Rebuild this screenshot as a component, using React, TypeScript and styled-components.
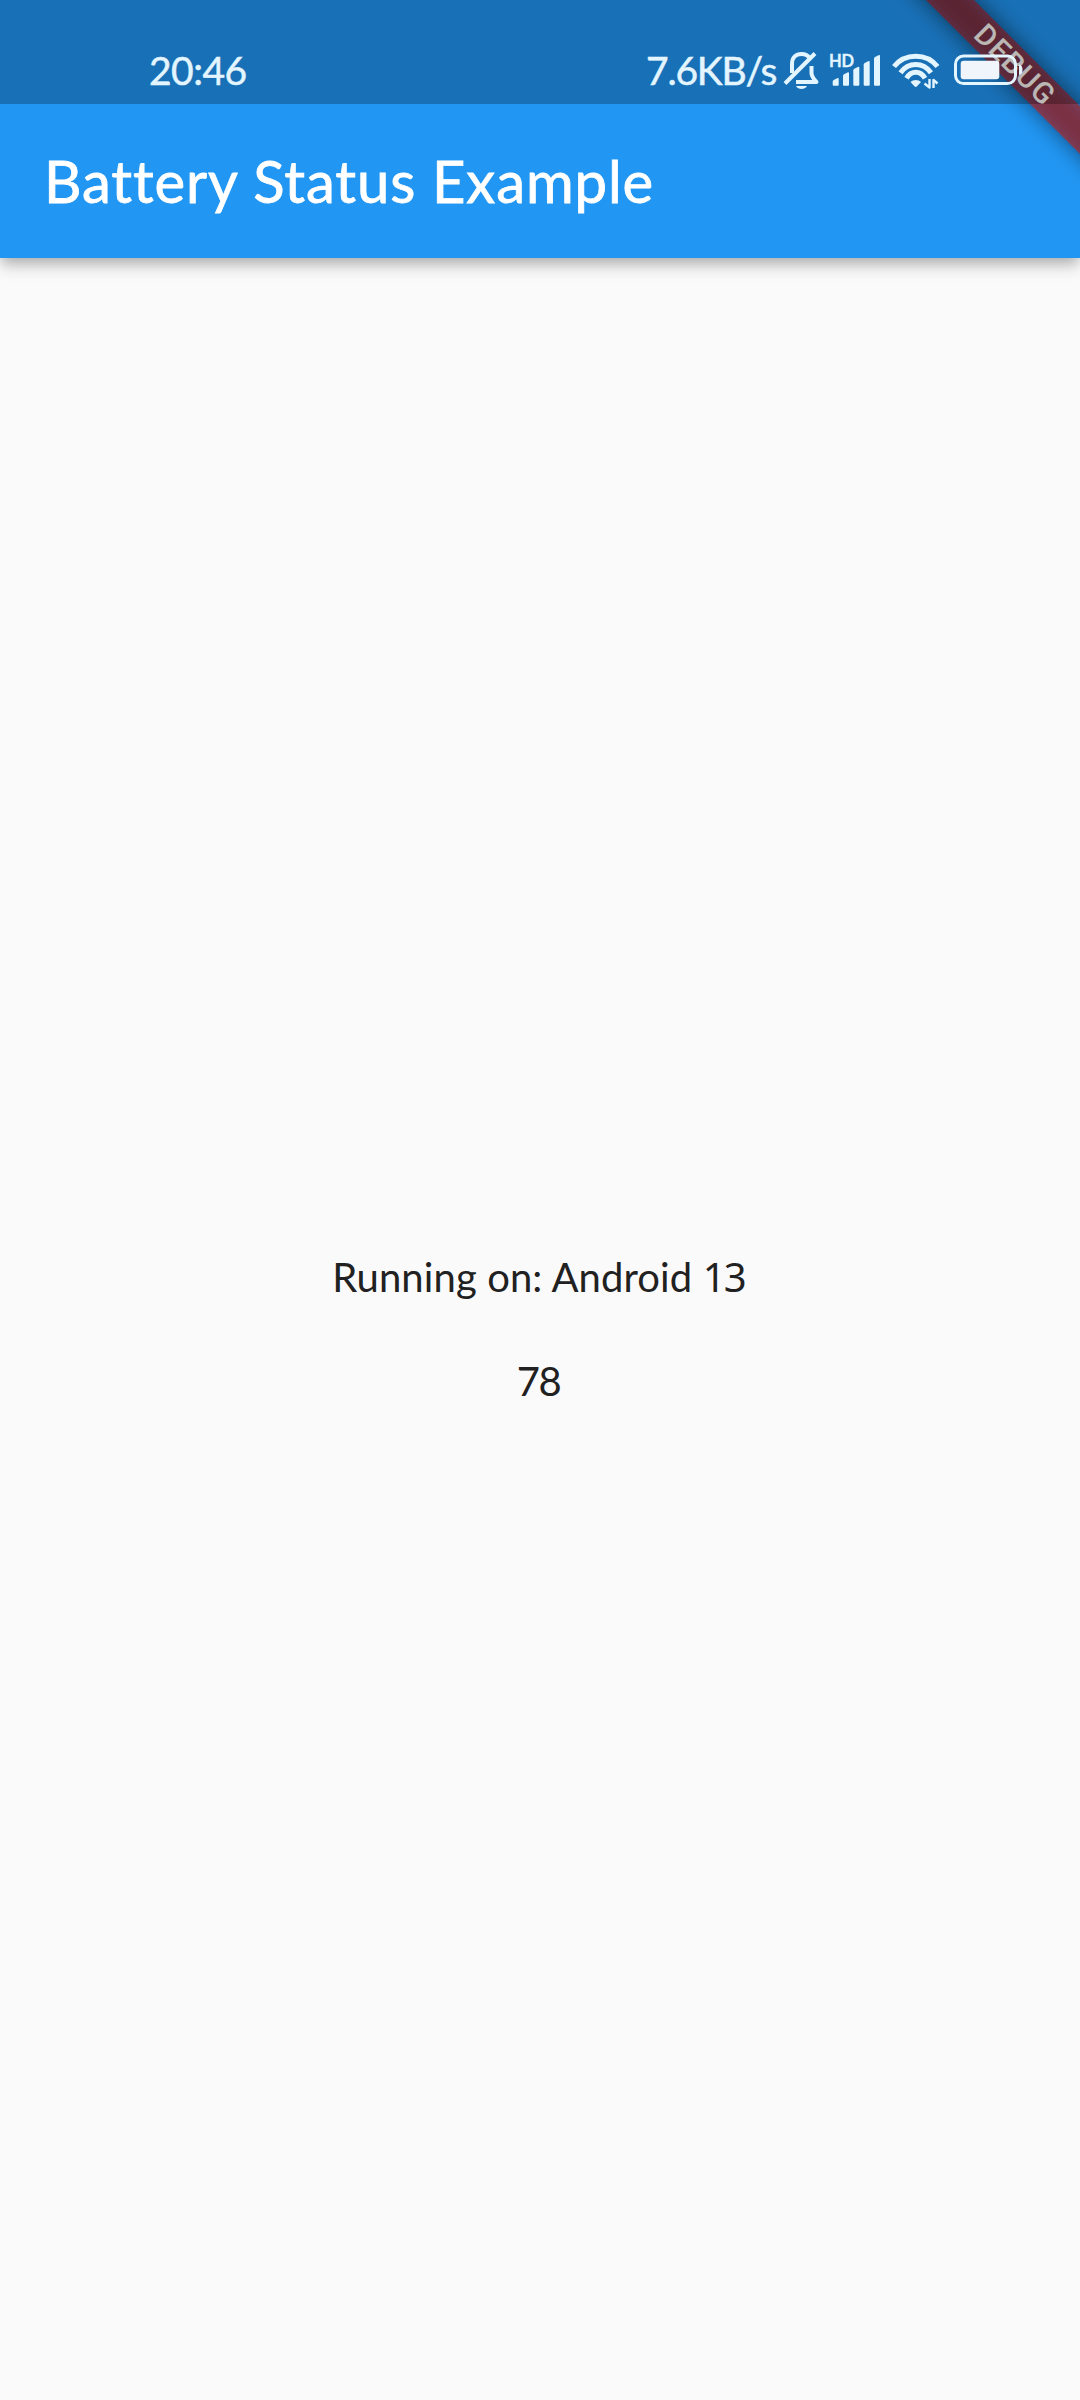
import React from "react";
import styled, { createGlobalStyle } from "styled-components";

const GlobalStyle = createGlobalStyle`
  * { box-sizing: border-box; }
  body { margin: 0; background: #fafafa; }
`;

const Screen = styled.div`
  position: relative;
  display: flex;
  flex-direction: column;
  width: 1080px;
  height: 2400px;
  overflow: hidden;
  background: #fafafa;
  font-family: Lato, "Noto Sans", sans-serif;
`;

const Header = styled.header`
  background: #2196f3;
  box-shadow: 0 6px 11px -3px rgba(0, 0, 0, 0.2), 0 11px 14px 0 rgba(0, 0, 0, 0.1),
    0 3px 20px 0 rgba(0, 0, 0, 0.08);
`;

const StatusBar = styled.div`
  position: relative;
  z-index: 3;
  display: flex;
  align-items: flex-start;
  height: 104px;
  padding: 46px 57px 0 149px;
  background: rgba(0, 0, 0, 0.25);
  color: #e3f5ff;
`;

const StatusIcons = styled.div`
  display: flex;
  align-items: flex-start;
  margin-left: auto;
`;

const StatusText = styled.span<{ $spacing: number; $width: number }>`
  width: ${(p) => p.$width}px;
  font-size: 39px;
  font-weight: 400;
  line-height: 48px;
  letter-spacing: ${(p) => p.$spacing}px;
  white-space: nowrap;
  -webkit-text-stroke: 0.5px currentColor;
`;

const Icon = styled.svg`
  display: block;
  flex: none;
  height: 48px;
  fill: none;
  stroke-linejoin: round;
`;

const Signal = styled.div`
  display: grid;
  width: 55px;
  height: 48px;
  > * { grid-area: 1 / 1; }
`;

const HdLabel = styled.span`
  padding-top: 6px;
  font: 700 16.5px/18px Lato, sans-serif;
  letter-spacing: -0.3px;
  -webkit-text-stroke: 0.3px currentColor;
`;

const AppBar = styled.div`
  display: flex;
  align-items: center;
  height: 154px;
  padding: 0 44px;
`;

const Title = styled.h1`
  margin: 0;
  color: #fff;
  font-size: 58px;
  font-weight: 400;
  line-height: 70px;
  letter-spacing: 0.9px;
  white-space: nowrap;
  -webkit-text-stroke: 0.8px currentColor;
`;

const Body = styled.main`
  display: flex;
  flex: 1;
  flex-direction: column;
  align-items: center;
  padding: 993px 3px 0 0;
  color: #212121;
`;

const Line = styled.p<{ $spacing: number }>`
  height: 52px;
  margin: 0 0 52px;
  font-size: 40px;
  line-height: 52px;
  letter-spacing: ${(p) => p.$spacing}px;
  white-space: nowrap;
`;

const Digits = styled.span`
  font-family: "Noto Sans", sans-serif;
  line-height: 1;
  letter-spacing: -1.8px;
`;

const Banner = styled.div`
  position: absolute;
  z-index: 2;
  top: 48px;
  left: 865px;
  width: 300px;
  height: 34px;
  transform: rotate(45deg);
  text-align: center;
  &::before {
    content: "";
    position: absolute;
    inset: 0;
    background: rgba(0, 0, 0, 0.5);
    filter: blur(11px);
  }
`;

const BannerLabel = styled.span`
  position: relative;
  display: block;
  background: rgba(183, 28, 28, 0.627);
  color: #f9f4f0;
  font: 500 29.5px/34px Roboto, sans-serif;
  letter-spacing: 1.4px;
`;

const bars = [
  [832.7, 78.5],
  [843, 72.8],
  [853.3, 67.3],
  [863.7, 61.5],
  [874, 55.5],
];

export default function App() {
  return (
    <>
      <GlobalStyle />
      <Screen>
        <Header>
          <StatusBar>
            <StatusText $spacing={-0.5} $width={110}>20:46</StatusText>
            <StatusIcons>
              <StatusText $spacing={-1.2} $width={137}>7.6KB/s</StatusText>
              <Icon width="46" viewBox="783 46 46 48" stroke="currentColor" strokeWidth="4">
                <path d="M792 73V64C792 57 796 54 801.5 54C805 54 808 55.5 809.5 58M811.5 66V73C811.5 77 814 79 816.5 82H796" />
                <path d="M785 83.5L815 53.5" />
                <path d="M796 86H807C805.5 88.3 804 89 801.5 89S797.5 88.3 796 86Z" fill="currentColor" stroke="none" />
              </Icon>
              <Signal>
                <Icon width="55" viewBox="829 46 55 48">
                  {bars.map(([x, y]) => (
                    <path key={x} fill="currentColor" d={`M${x} ${y + 3}Q${x} ${y + 2} ${x + 1} ${y + 1.5}L${x + 5} ${y - 0.5}Q${x + 6} ${y - 0.8} ${x + 6} ${y + 0.5}V84.8Q${x + 6} 85.8 ${x + 5} 85.8H${x + 1}Q${x} 85.8 ${x} 84.8Z`} />
                  ))}
                </Icon>
                <HdLabel>HD</HdLabel>
              </Signal>
              <Icon width="69" viewBox="884 46 69 48" stroke="currentColor" strokeWidth="5">
                <path d="M894 66.5C905 52.8 926.5 52.8 937.5 66.5" />
                <path d="M900.5 72.7C908.5 61.8 923 61.8 931 72.7" />
                <path d="M906.5 78.3C911 70.3 920.5 70.3 925 78.3" />
                <path d="M910.5 82C913 79.3 918.5 79.3 921 82L917 86.3Q915.7 87.5 914.4 86.3Z" fill="currentColor" stroke="none" />
                <path d="M929.5 79V87.5L924.5 83.5M933.5 88V80L937.5 83.5" strokeWidth="2.4" />
              </Icon>
              <Icon width="70" viewBox="953 46 70 48">
                <rect x="955.5" y="56" width="60" height="27.6" rx="8" stroke="currentColor" strokeWidth="3" />
                <rect x="960.7" y="60.7" width="38.6" height="18.5" rx="3" fill="#f0f4fb" />
                <path d="M1019 64.5Q1022.5 65 1022.5 69.8T1019 75Z" fill="currentColor" />
              </Icon>
            </StatusIcons>
          </StatusBar>
          <AppBar>
            <Title>Battery Status Example</Title>
          </AppBar>
        </Header>
        <Body>
          <Line $spacing={0.1}>Running on: Android <Digits>13</Digits></Line>
          <Line $spacing={-1.5}>78</Line>
        </Body>
        <Banner>
          <BannerLabel>DEBUG</BannerLabel>
        </Banner>
      </Screen>
    </>
  );
}
